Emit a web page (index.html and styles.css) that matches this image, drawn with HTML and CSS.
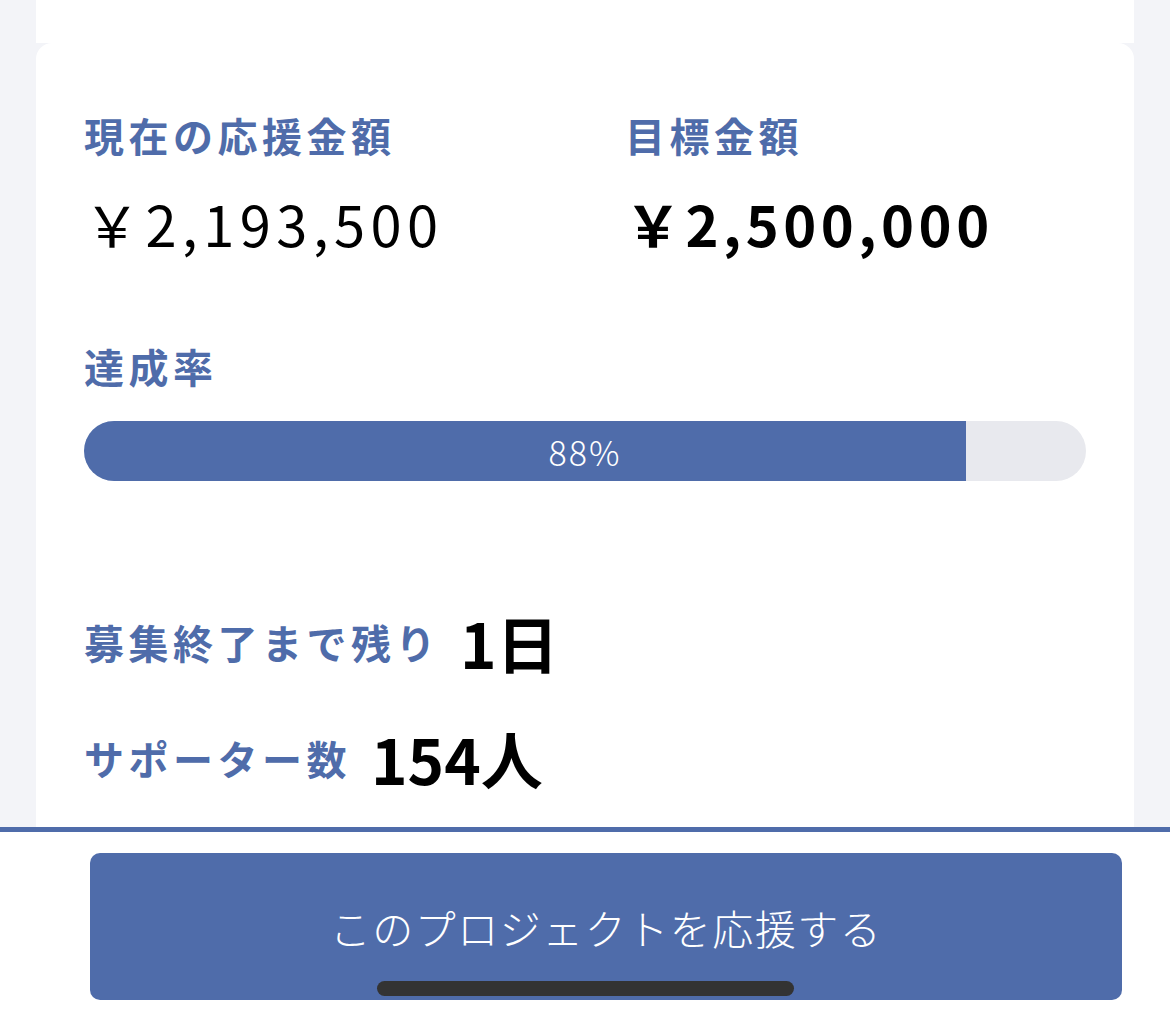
FILE: index.html
```html
<!DOCTYPE html>
<html lang="ja">
<head>
<meta charset="utf-8">
<link rel="stylesheet" href="styles.css">
</head>
<body>
<div class="page">
  <div class="top-card"></div>
  <div class="card">
    <div class="amounts">
      <div class="amount-col">
        <div class="label">現在の応援金額</div>
        <div class="amount">￥2,193,500</div>
      </div>
      <div class="amount-col">
        <div class="label">目標金額</div>
        <div class="amount bold">￥2,500,000</div>
      </div>
    </div>
    <div class="label rate-label">達成率</div>
    <div class="progress">
      <div class="progress-fill" style="width: 88%"></div>
      <div class="progress-text">88%</div>
    </div>
    <div class="stat stat-days">
      <span class="label">募集終了まで残り</span>
      <span class="stat-value">1日</span>
    </div>
    <div class="stat stat-supporters">
      <span class="label">サポーター数</span>
      <span class="stat-value">154人</span>
    </div>
  </div>
</div>
<div class="bottom-bar">
  <button class="support-btn">このプロジェクトを応援する</button>
  <div class="home-indicator"></div>
</div>
</body>
</html>
```

FILE: styles.css
```css
* { box-sizing: border-box; }
html, body {
  margin: 0;
  padding: 0;
  background: #f3f4f8;
  font-family: "Noto Sans CJK JP", "Noto Sans", sans-serif;
  height: 1020px;
  overflow: hidden;
}
.page {
  width: 1098px;
  margin: 0 0 0 36px;
}
.top-card {
  height: 43px;
  background: #fff;
}
.card {
  background: #fff;
  border-radius: 16px 16px 0 0;
  padding: 68px 48px 200px 48px;
}
.amounts {
  display: grid;
  grid-template-columns: 1fr 1fr;
  column-gap: 80px;
}
.label {
  color: #4f6caa;
  font-weight: 700;
  font-size: 40px;
  letter-spacing: 4.5px;
  line-height: 48px;
}
.amount {
  margin-top: 29px;
  font-size: 56px;
  line-height: 70px;
  color: #000;
  font-weight: 400;
  letter-spacing: 5.5px;
}
.amount.bold {
  font-weight: 700;
  letter-spacing: 4.5px;
}
.rate-label {
  margin-top: 84px;
}
.progress {
  position: relative;
  margin-top: 31px;
  height: 60px;
  border-radius: 30px;
  background: #e8e9ee;
  overflow: hidden;
}
.progress-fill {
  height: 100%;
  background: #4f6caa;
}
.progress-text {
  position: absolute;
  inset: 0;
  display: flex;
  align-items: center;
  justify-content: center;
  color: #fff;
  font-size: 34px;
  font-weight: 300;
  letter-spacing: 2px;
}
.stat {
  display: flex;
  align-items: center;
  gap: 20px;
}
.stat-days { margin-top: 121px; }
.stat-supporters { margin-top: 36px; }
.stat-value {
  font-size: 62px;
  font-weight: 700;
  color: #000;
  line-height: 80px;
}
.bottom-bar {
  position: fixed;
  left: 0;
  right: 0;
  top: 827px;
  height: 193px;
  background: #fff;
  border-top: 5px solid #4f6caa;
  padding-left: 90px;
}
.support-btn {
  display: block;
  margin-top: 21px;
  width: 1032px;
  height: 147px;
  border: none;
  border-radius: 10px;
  background: #4f6caa;
  color: #fff;
  font-family: "Noto Sans CJK JP", sans-serif;
  font-size: 41px;
  font-weight: 300;
  letter-spacing: 1.5px;
  padding: 0;
}
.home-indicator {
  position: absolute;
  left: 377px;
  top: 149px;
  width: 417px;
  height: 15px;
  border-radius: 8px;
  background: #333;
}
```
